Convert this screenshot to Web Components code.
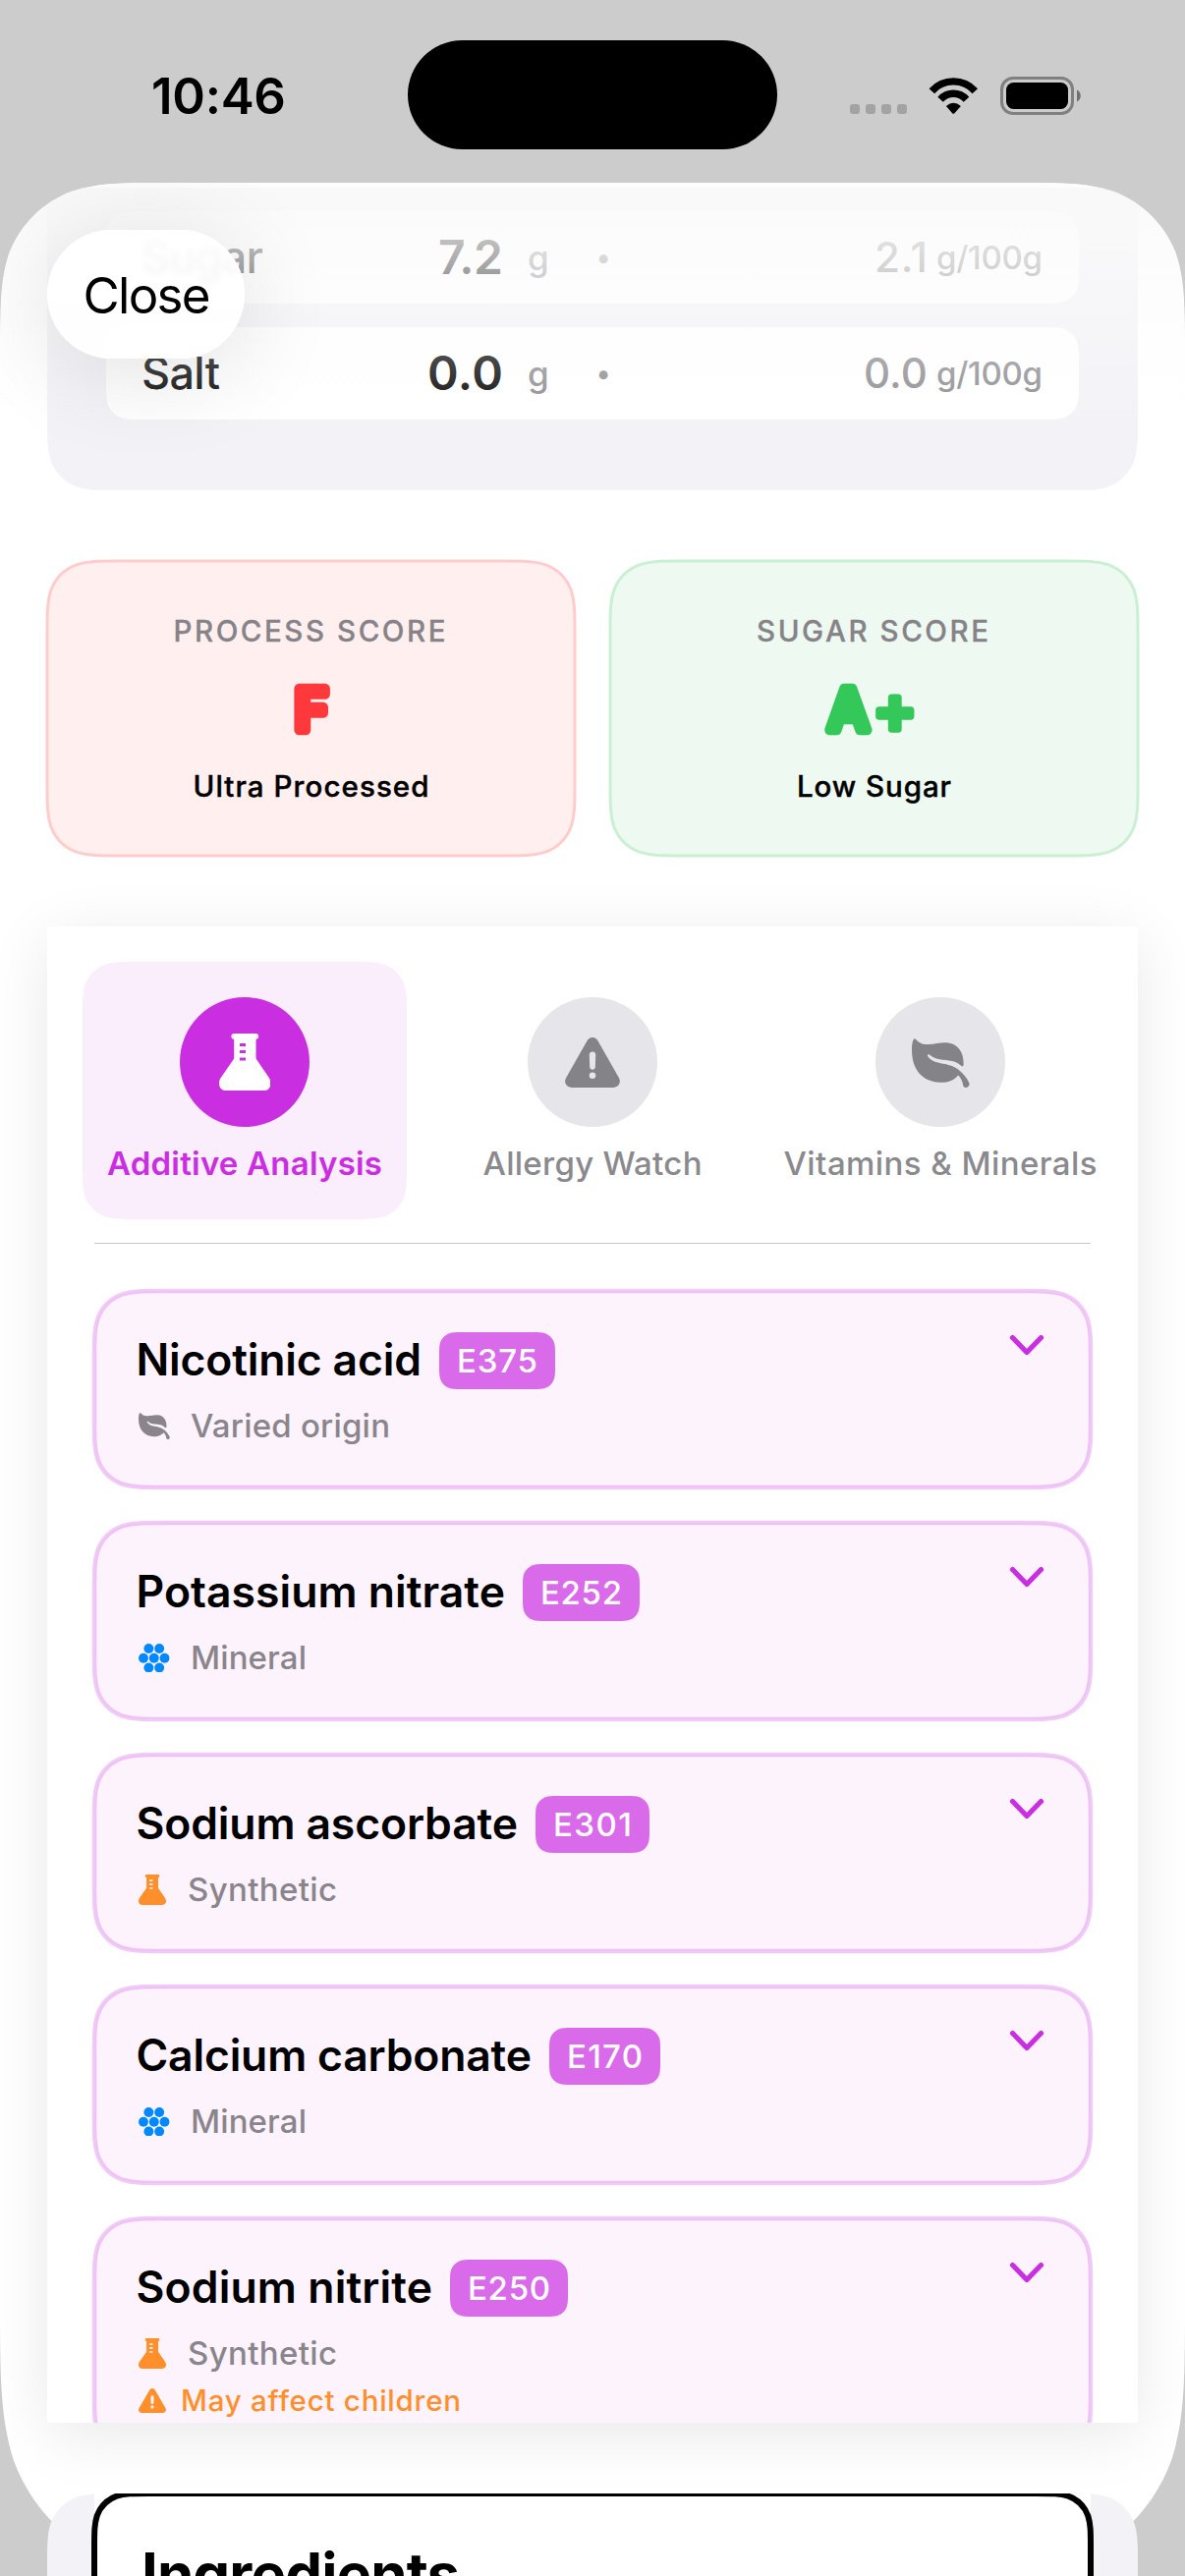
<!DOCTYPE html>
<html lang="en">
<head>
<meta charset="utf-8">
<title>Product details</title>
<style>
html,body{margin:0;padding:0}
body{width:1206px;height:2622px;overflow:hidden;background:#ccc;font-family:Inter,"Liberation Sans",sans-serif;color:#000}
</style>
</head>
<body>
<app-screen></app-screen>
<script>
// Continuous-curvature corner path: r is [topLeft, topRight, bottomRight, bottomLeft].
function smoothPath(w, h, r) {
  const lim = Math.min(w, h) / 2;
  const corner = (R, f, first) => { // f maps corner-local (u, v) to box coordinates
    const k = Math.min(1.528665 * R, Math.max(lim, R));
    const a = Math.min(1.088493 * R, k), b = 0.868407 * R;
    const p = (u, v) => f(u, v).map(n => n.toFixed(2)).join(' ');
    return (first ? 'M' : 'L') + p(k, 0) +
      'C' + p(a, 0) + ' ' + p(b, 0) + ' ' + p(.631494 * R, .074911 * R) +
      'C' + p(.372824 * R, .169060 * R) + ' ' + p(.169060 * R, .372824 * R) + ' ' + p(.074911 * R, .631494 * R) +
      'C' + p(0, b) + ' ' + p(0, a) + ' ' + p(0, k);
  };
  return corner(r[1], (u, v) => [w - u, v], true) +
    corner(r[2], (u, v) => [w - v, h - u]) +
    corner(r[3], (u, v) => [u, h - v]) +
    corner(r[0], (u, v) => [v, u]) + 'Z';
}

const define = (name, render) => customElements.define(name, class extends HTMLElement {
  constructor() { super(); this.attachShadow({ mode: 'open' }); }
  connectedCallback() { if (!this.shadowRoot.firstChild) this.shadowRoot.innerHTML = render(this); }
});

// Box with a smooth-cornered fill and a stroke centred on its edge.
customElements.define('smooth-box', class extends HTMLElement {
  constructor() {
    super();
    this.attachShadow({ mode: 'open' }).innerHTML = `<style>
      :host{display:block;position:relative}
      svg{position:absolute;left:0;top:0;width:100%;height:100%;overflow:visible;pointer-events:none}
      .in{position:relative;height:100%;box-sizing:border-box}
    </style><svg aria-hidden="true"><path/></svg><div class="in"><slot></slot></div>`;
  }
  connectedCallback() {
    this.draw();
    new ResizeObserver(() => this.draw()).observe(this);
  }
  draw() {
    const w = this.offsetWidth, h = this.offsetHeight;
    if (!w || !h) return;
    let r = (this.getAttribute('r') || '0').split(' ').map(Number);
    if (r.length < 4) r = [r[0], r[0], r[0], r[0]];
    const path = this.shadowRoot.querySelector('path');
    path.setAttribute('d', smoothPath(w, h, r));
    path.setAttribute('fill', this.getAttribute('fill') || 'none');
    path.setAttribute('stroke', this.getAttribute('stroke') || 'none');
    path.setAttribute('stroke-width', this.getAttribute('sw') || 0);
  }
});

const ICONS = {
  flask: ['0 0 52.5 58', '<path fill-rule="evenodd" d="M15.4 0H37a2.9 2.9 0 0 1 .5 5.8V25.5L50.8 45C54.8 51 51.5 58 46 58H6.5C1 58-2.3 51 1.7 45L15.2 25.5V5.8A2.9 2.9 0 0 1 15.4 0ZM21 10v3h6v-3zM21 17v3h6v-3zM21 24.6v3h6v-3z"/>'],
  warn: ['0 0 56 51', '<path fill-rule="evenodd" d="M22.6 3.2C25-1.1 31-1.1 33.4 3.2L55 41.2C57.5 46 54.4 51 49 51H7C1.6 51-1.5 46 1 41.2ZM28 14.6c-1.900 0-3.300 1.400-3.200 3.200l.4 12.200c.1 1.700 1.200 2.700 2.800 2.700s2.700-1 2.800-2.700l.4-12.200c.1-1.800-1.300-3.200-3.200-3.200ZM28 35.400a3.300 3.300 0 1 0 0 6.600a3.300 3.300 0 1 0 0-6.600Z"/>'],
  leaf: ['0 0 59 50', '<path d="M2.700 .2C4.500-.6 6 6.500 17 6C24 5.800 29 3.800 35.600 4.300C47 5.200 53 14 52.600 26.500C52.500 28.600 51.300 28.900 49.800 27.600C42 20.500 34 23.200 25 20.500C21.500 19.400 19.500 17.500 18 16.500C16.400 15.600 15.400 16.600 16.200 18C22 27.500 36 23.500 46.500 31C52.500 35.500 56 40 58.400 45.500C59.200 47.500 57.500 50 55 50C53 50 52 48.500 52 47C51.600 43.500 50 40.500 47.400 37.400C42 43 36 45 29 44.800C10 44 0 31 0 12C0 7 .6 1.200 2.700 .2Z"/>'],
  hex: ['0 0 31.500 29.400', [[15.75,14.7],[5,14.7],[26.5,14.7],[10.35,5],[21.15,5],[10.35,24.4],[21.15,24.4]].map(c => `<circle cx="${c[0]}" cy="${c[1]}" r="4.950"/>`).join('')],
  chevron: ['0 0 36 24', '<path d="M3.500 4.500L18 19.500L32.500 4.500" fill="none" stroke="currentColor" stroke-width="5.200" stroke-linecap="round" stroke-linejoin="round"/>']
};

define('app-icon', el => {
  const [vb, body] = ICONS[el.getAttribute('name')];
  return `<style>:host{display:block;flex:none}svg{display:block;width:100%;height:100%;fill:currentColor}</style>
  <svg viewBox="${vb}" preserveAspectRatio="none" aria-hidden="true">${body}</svg>`;
});

define('status-bar', () => `<style>
  :host{display:grid;grid-template-columns:1fr 376px 1fr;height:186px;box-sizing:border-box;padding:41px 106px 33px 152px}
  .time{font-weight:600;font-size:51px;line-height:60px;margin:27px 0 0 2px}
  .island{height:111px;border-radius:56px;background:#000;margin-left:-23px;margin-right:23px}
  .sys{display:flex;align-items:flex-end;justify-content:flex-end;height:39px;margin-top:37px}
  .dots{display:flex;gap:6px;margin:0 22px 1px 0}
  .dots i{width:10px;height:10px;border-radius:3px;background:#a3a3a3}
  svg{display:block;flex:none}
</style>
<div class="time"><fit-text w="137">10:46</fit-text></div>
<div class="island"></div>
<div class="sys">
  <div class="dots"><i></i><i></i><i></i><i></i></div>
  <svg width="51" height="38" viewBox="-.3 0 51 38" style="margin:0 22px .5px 0"><g fill="none" stroke="#000" stroke-width="7.400"><path d="M3 13.700A29.600 29.600 0 0 1 47 13.700"/><path d="M11.800 22.200A17.700 17.700 0 0 1 38.200 22.200"/></g><path d="M17.600 29Q25 22.600 32.600 29L25.900 36.400Q25 37.200 24.100 36.400Z"/></svg>
  <svg width="82" height="39" viewBox="0 0 82 39"><rect x="1.500" y="1.500" width="72" height="36" rx="11.500" fill="none" stroke="#808080" stroke-width="3"/><rect x="6" y="6" width="63" height="27" rx="7.500"/><path d="M78 13.500c5 2.200 5 9.800 0 12z" fill="#707070"/></svg>
</div>`);

define('nutrient-row', el => {
  const a = n => el.getAttribute(n);
  return `<style>
  :host{display:block}
  smooth-box{height:94px}
  .row{display:flex;align-items:center;height:93px;padding:0 37px 0 36px;white-space:nowrap}
  .name{width:200px;font-size:45px;font-weight:500}
  .val{width:168px;text-align:right;font-size:48px;font-weight:600}
  .unit{width:60px;margin-left:25px;font-size:35px;font-weight:500;color:#8a8a8e}
  .dot{width:30px;font-size:28px;color:#8a8a8e;margin-left:2px;text-align:center}
  .per{flex:1;display:flex;align-items:center;justify-content:flex-end;gap:9px;color:#8a8a8e;font-size:42px;font-weight:500}
  .per small{font-size:33px;font-weight:500}
</style>
<smooth-box r="24" fill="#fff"><div class="row">
  <span class="name"><fit-text w="${a('nw')}">${a('name')}</fit-text></span>
  <span class="val"><fit-text w="${a('vw')}">${a('value')}</fit-text></span>
  <span class="unit">g</span><span class="dot">•</span>
  <span class="per"><fit-text w="${a('pw')}">${a('per')}</fit-text><small><fit-text w="108">g/100g</fit-text></small></span>
</div></smooth-box>`;
});

define('score-card', el => {
  const a = n => el.getAttribute(n);
  return `<style>
  :host{display:block;flex:1}
  smooth-box{height:300px}
  .col{display:flex;flex-direction:column;align-items:center;gap:25px;padding-top:54px}
  .t,.b{height:36px;line-height:35px;font-size:29.500px}
  .t{font-weight:500;color:#858387;padding-right:3px;-webkit-text-stroke:.3px}
  .b{font-weight:500;-webkit-text-stroke:.4px}
  svg{display:block;overflow:visible}
  text{font:500 57.500px Inter,sans-serif;stroke-width:10.500px;stroke-linejoin:round;stroke-linecap:round}
  .plus{font-size:66px;stroke-width:7.500px}
</style>
<smooth-box r="48" fill="${a('fill')}" stroke="${a('line')}" sw="3"><div class="col">
  <div class="t"><fit-text w="${a('tw')}">${a('heading')}</fit-text></div>
  <svg width="140" height="72"><text x="${a('gx')}" y="57" text-anchor="middle" fill="${a('ink')}" stroke="${a('ink')}">${a('grade').replace('+', '<tspan class="plus" dx="5" dy="1.500">+</tspan>')}</text></svg>
  <div class="b"><fit-text w="${a('bw')}">${a('note')}</fit-text></div>
</div></smooth-box>`;
});

define('tab-button', el => {
  const a = n => el.getAttribute(n), on = el.hasAttribute('active');
  return `<style>
  :host{display:block;width:330px}
  smooth-box{height:262px}
  .col{display:flex;flex-direction:column;align-items:center;padding-top:36px}
  .disc{width:132px;height:132px;border-radius:50%;display:flex;align-items:center;justify-content:center;background:${on ? '#c92fe0' : '#e5e5ea'};color:${on ? '#fff' : '#838388'}}
  .label{height:40px;line-height:40px;margin-top:17px;font-size:33px;font-weight:${on ? 600 : 500};color:${on ? '#c92fe0' : '#8a8a8e'};white-space:nowrap}
  app-icon{width:${a('iw')}px;height:${a('ih')}px;margin-top:${a('dy') || 0}px}
</style>
<smooth-box r="36" fill="${on ? '#faeefd' : 'none'}"><div class="col">
  <div class="disc"><app-icon name="${a('icon')}"></app-icon></div>
  <div class="label"><fit-text w="${a('lw')}">${a('label')}</fit-text></div>
</div></smooth-box>`;
});

define('additive-card', el => {
  const a = n => el.getAttribute(n);
  const kind = {
    varied: ['leaf', 32, 27, '#8a858c', 'Varied origin', 203, 21],
    mineral: ['hex', 31.5, 29.4, '#0088ff', 'Mineral', 118, 21.5],
    synthetic: ['flask', 28, 31, '#ff8f2a', 'Synthetic', 152, 22]
  }[a('origin')];
  return `<style>
  :host{display:block}
  .frame{height:${a('warn') ? 246 : 200}px}
  .badge{height:58px}
  .card{display:flex;justify-content:space-between;align-items:flex-start;padding:42px 47px 42px 42px}
  .head{display:flex;align-items:center;height:58px;white-space:nowrap}
  .name{font-size:44.500px;font-weight:600;padding:0 18px 2px .5px}
  .code{height:58px;line-height:58px;padding:0 18px;color:#fff;font-size:33px;font-weight:500}
  .line{display:flex;align-items:center;height:40px;margin-top:17px;padding-left:3px;font-size:33px;font-weight:450;color:#8a858c;white-space:nowrap}
  .line app-icon{width:${kind[1]}px;height:${kind[2]}px;color:${kind[3]};margin:1px ${kind[6]}px 0 0}
  .warn{display:flex;align-items:center;height:36px;margin-top:10px;padding-left:3px;font-size:29.500px;font-weight:500;color:#ff8f2a;white-space:nowrap}
  .warn app-icon{width:28px;height:25px;margin-right:15px}
  .chev{width:36px;height:24px;color:#c92fe0;margin-top:1px}
</style>
<smooth-box class="frame" r="45" fill="#fdf3fd" stroke="rgba(201,47,224,.25)" sw="4.500"><div class="card">
  <div>
    <div class="head"><span class="name"><fit-text w="${a('nw') - .5}">${a('name')}</fit-text></span>
      <smooth-box class="badge" r="16" fill="#d96ae9"><div class="code"><fit-text w="${a('cw')}">${a('code')}</fit-text></div></smooth-box></div>
    <div class="line"><app-icon name="${kind[0]}"></app-icon><fit-text w="${kind[5]}">${kind[4]}</fit-text></div>
    ${a('warn') ? `<div class="warn"><app-icon name="warn"></app-icon><fit-text w="285">${a('warn')}</fit-text></div>` : ''}
  </div>
  <app-icon class="chev" name="chevron"></app-icon>
</div></smooth-box>`;
});

define('analysis-panel', () => `<style>
  :host{display:block;margin-top:72px;height:1523px;background:#fff;box-shadow:0 12px 60px rgba(0,0,0,.09)}
  .clip{height:1523px;overflow:hidden;box-sizing:border-box;padding-top:36px}
  .tabs{display:flex;gap:24px;padding:0 36px}
  hr{border:0;height:1px;background:#c6c6c8;margin:24px 48px 48px}
  .list{display:flex;flex-direction:column;gap:36px;padding:0 48px}
</style>
<div class="clip">
  <div class="tabs">
    <tab-button active icon="flask" iw="52.5" ih="58" label="Additive Analysis" lw="280"></tab-button>
    <tab-button icon="warn" iw="56" ih="51" dy="1" label="Allergy Watch" lw="223"></tab-button>
    <tab-button icon="leaf" iw="59" ih="50" dy="2" label="Vitamins &amp;amp; Minerals" lw="319"></tab-button>
  </div>
  <hr>
  <div class="list">
    <additive-card name="Nicotinic acid" nw="291" code="E375" cw="82" origin="varied"></additive-card>
    <additive-card name="Potassium nitrate" nw="376" code="E252" cw="83" origin="mineral"></additive-card>
    <additive-card name="Sodium ascorbate" nw="389" code="E301" cw="80" origin="synthetic"></additive-card>
    <additive-card name="Calcium carbonate" nw="403" code="E170" cw="77" origin="mineral"></additive-card>
    <additive-card name="Sodium nitrite" nw="302" code="E250" cw="84" origin="synthetic" warn="May affect children"></additive-card>
  </div>
</div>`);

define('ingredients-section', () => `<style>
  :host{display:block;margin-top:72px}
  .outer{height:200px}
  .clip{margin:0 45px;height:200px;overflow:hidden}
  .paper{margin:0 3px;background:#fff}
  .body{height:300px;box-sizing:border-box;padding:48px 48px 0;font-size:60px;line-height:68px;font-weight:700}
</style>
<smooth-box class="outer" r="48" fill="#f2f2f7"><div class="clip"><div class="paper">
  <smooth-box r="36" stroke="#000" sw="6"><div class="body"><fit-text w="324">Ingredients</fit-text></div></smooth-box>
</div></div></smooth-box>`);

define('close-button', () => `<style>
  :host{position:absolute;left:48px;top:48px;width:201px;height:131px;border-radius:66px;display:flex;align-items:center;justify-content:center;
    background:rgba(255,255,255,.9);backdrop-filter:blur(3px);box-shadow:0 12px 100px rgba(0,0,0,.12),inset 0 0 3px 2px rgba(255,255,255,.9);font-size:51px}
  fit-text{margin:2px 0 0 2px}
</style><fit-text w="130">Close</fit-text>`);

define('app-screen', () => `<style>
  :host{display:block;width:1206px;height:2622px;overflow:hidden;background:#ccc}
  .sheet{position:relative;height:2436px;clip-path:path("${smoothPath(1206, 2436, [116, 116, 0, 0])}")}
  .bg{height:2436px}
  .content{padding:0 48px}
  .facts{height:313px;box-sizing:border-box}
  .rows{display:flex;flex-direction:column;gap:24px;padding:29px 60px 0}
  .scores{display:flex;gap:36px;margin-top:72px}
  .fade{position:absolute;left:0;top:0;width:100%;height:237px;background:linear-gradient(rgba(249,249,249,.95) 0,rgba(250,250,250,.87) 14%,rgba(251,251,251,.74) 27%,rgba(251,251,251,.64) 38%,rgba(252,252,252,.29) 75%,rgba(252,252,252,.16) 89%,rgba(252,252,252,.08) 100%)}
  .edge{position:absolute;left:0;top:0;width:100%;height:5px;background:rgba(255,255,255,.7)}
</style>
<status-bar></status-bar>
<div class="sheet">
  <smooth-box class="bg" r="116 116 186 186" fill="#fff">
    <div class="content">
      <smooth-box class="facts" r="0 0 48 48" fill="#f2f2f7"><div class="rows">
        <nutrient-row name="Sugar" nw="124" value="7.2" vw="66" per="2.1" pw="54"></nutrient-row>
        <nutrient-row name="Salt" nw="80" value="0.0" vw="77" per="0.0" pw="65"></nutrient-row>
      </div></smooth-box>
      <div class="scores">
        <score-card heading="PROCESS SCORE" tw="277" grade="F" gx="70" note="Ultra Processed" bw="240" ink="#ff383c" fill="#ffefef" line="#ffcccd"></score-card>
        <score-card heading="SUGAR SCORE" tw="236" grade="A+" gx="68" note="Low Sugar" bw="157" ink="#34c759" fill="#eef9f1" line="#c9f0d3"></score-card>
      </div>
      <analysis-panel></analysis-panel>
      <ingredients-section></ingredients-section>
    </div>
  </smooth-box>
  <div class="fade"></div>
  <div class="edge"></div>
  <close-button></close-button>
</div>`);

// Text tracked so that its advance equals the w attribute, in px.
customElements.define('fit-text', class extends HTMLElement {
  constructor() {
    super();
    this.attachShadow({ mode: 'open' }).innerHTML = '<style>:host{display:inline-block;white-space:pre}</style><slot></slot>';
  }
  connectedCallback() {
    const w = +this.getAttribute('w'), n = this.textContent.length;
    const ls = (w - this.getBoundingClientRect().width) / (n - 1);
    this.style.letterSpacing = ls + 'px';
    this.style.marginRight = -ls + 'px';
  }
});
</script>
</body>
</html>
